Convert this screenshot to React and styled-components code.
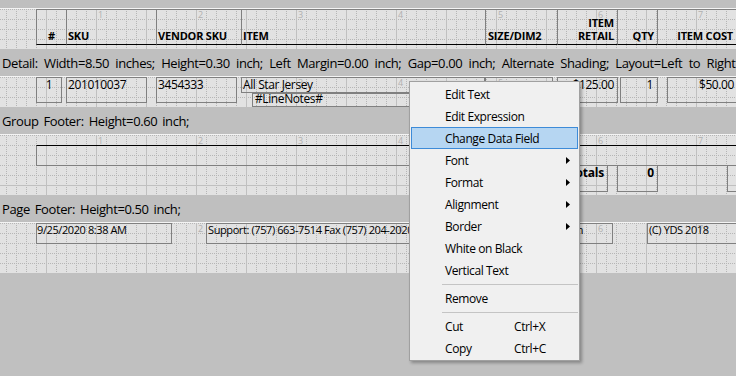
import React, { useId } from 'react';
import styled, { createGlobalStyle } from 'styled-components';

const GlobalStyle = createGlobalStyle`
  html, body {
    margin: 0;
    padding: 0;
    overflow: hidden;
    background: #c0c0c0;
  }
`;

const UI_FONT = '"Open Sans", "Noto Sans", "Liberation Sans", sans-serif';

const Page = styled.div`
  position: relative;
  width: 736px;
  height: 376px;
  overflow: hidden;
  background: #c0c0c0;
  font-family: ${UI_FONT};
  color: #000;
`;

const Surface = styled.div`
  display: flex;
  flex-direction: column;
  width: 850px;
`;

const BandLabel = styled.div`
  display: flex;
  align-items: center;
  height: ${(p) => p.$h || 27}px;
  padding-left: 2px;
  background: #bfbfbf;
  border-bottom: 1px solid #f4f4f4;
  font-size: 13px;
  letter-spacing: -0.4px;
  word-spacing: ${(p) => p.$ws ?? 3}px;
  white-space: nowrap;
  overflow: hidden;
`;

const Band = styled.div`
  position: relative;
  height: ${(p) => p.$h}px;
  background: #e2e2e2;
  overflow: hidden;
`;

const GridSvg = styled.svg`
  position: absolute;
  left: 0;
  top: 0;
  width: 100%;
  height: 100%;
  pointer-events: none;
`;

const RulerNum = styled.text`
  font-family: ${UI_FONT};
  font-size: 9px;
  fill: #b0b0b0;
`;

const Field = styled.div`
  position: absolute;
  left: ${(p) => p.$x}px;
  top: ${(p) => p.$y || 0}px;
  width: ${(p) => p.$w}px;
  height: ${(p) => p.$h}px;
  box-sizing: border-box;
  border: 1px solid #808080;
  ${(p) => p.$topLine && 'border-top-color: #000;'}
  padding: 0 ${(p) => p.$pr ?? 1}px 0 ${(p) => p.$pl ?? 1}px;
  font-size: ${(p) => p.$fs || 12}px;
  font-weight: ${(p) => (p.$bold ? 700 : 400)};
  line-height: ${(p) => p.$lh || 14}px;
  letter-spacing: ${(p) => (p.$bold ? '-0.2px' : '-0.4px')};
  text-align: ${(p) => p.$align || 'left'};
  white-space: nowrap;
  overflow: hidden;
`;

const HeaderCell = styled.div`
  position: absolute;
  top: 0;
  left: ${(p) => p.$x}px;
  width: ${(p) => p.$w}px;
  height: 36px;
  box-sizing: border-box;
  display: flex;
  flex-direction: column;
  justify-content: flex-end;
  align-items: ${(p) => p.$align || 'flex-start'};
  border: 1px solid #808080;
  border-bottom-color: #000;
  padding: 0 ${(p) => p.$pr ?? 1}px 2px ${(p) => p.$pl ?? 1}px;
  font-size: 11px;
  font-weight: 700;
  line-height: 13px;
  letter-spacing: -0.2px;
  text-align: right;
  white-space: nowrap;
`;

const Menu = styled.div`
  position: absolute;
  left: 409px;
  top: 81px;
  width: 171px;
  box-sizing: border-box;
  padding: 1px;
  background: #f0f0f0;
  border: 1px solid #a0a0a0;
  box-shadow: 2px 2px 3px rgba(0, 0, 0, 0.3);
  font-size: 12px;
  letter-spacing: -0.4px;
`;

const MenuItem = styled.div`
  display: flex;
  align-items: center;
  height: 22px;
  box-sizing: border-box;
  padding-left: 33px;
  border: 1px solid ${(p) => (p.$active ? '#3d8bd8' : 'transparent')};
  background: ${(p) => (p.$active ? '#b6d6f2' : 'transparent')};
`;

const ItemLabel = styled.span`
  flex: 0 0 69px;
  white-space: nowrap;
`;

const Shortcut = styled.span`
  white-space: nowrap;
`;

const SubArrow = styled.svg`
  margin-left: auto;
  margin-right: 7px;
`;

const Separator = styled.div`
  height: 1px;
  margin: 3px 0 2px 31px;
  background: #c4c4c4;
`;

function Grid({ height }) {
  const id = useId().replace(/:/g, '');
  const hLines = [];
  for (let y = 50; y < height; y += 50) hLines.push(y);
  return (
    <GridSvg shapeRendering="crispEdges">
      <defs>
        <pattern id={`d${id}`} x="6" y="0" width="10" height="10" patternUnits="userSpaceOnUse">
          {[0, 2, 4, 6, 8].map((v) => (
            <rect key={`v${v}`} x="0" y={v} width="1" height="1" fill="#b6b6b6" />
          ))}
          {[2, 4, 6, 8].map((v) => (
            <rect key={`h${v}`} x={v} y="0" width="1" height="1" fill="#b6b6b6" />
          ))}
        </pattern>
        <pattern id={`m${id}`} x="46" y="0" width="50" height="10" patternUnits="userSpaceOnUse">
          <rect x="0" y="0" width="1" height="10" fill="#c0c0c0" />
        </pattern>
      </defs>
      <rect width="100%" height="100%" fill={`url(#d${id})`} />
      <rect width="100%" height="100%" fill={`url(#m${id})`} />
      {hLines.map((y) => (
        <rect key={y} x="0" y={y} width="100%" height="1" fill="#c0c0c0" />
      ))}
      {[1, 2, 3, 4, 5, 6, 7, 8].map((n) => (
        <RulerNum key={n} x={98 + (n - 1) * 100} y="9">{n}</RulerNum>
      ))}
    </GridSvg>
  );
}

const HEADERS = [
  { x: 36, w: 31, text: '#', align: 'center', pl: 0, pr: 0 },
  { x: 66, w: 91, text: 'SKU' },
  { x: 156, w: 86, text: 'VENDOR SKU' },
  { x: 241, w: 245, text: 'ITEM' },
  { x: 485, w: 73, text: 'SIZE/DIM2', pl: 2 },
  { x: 557, w: 61, text: ['ITEM', 'RETAIL'], align: 'flex-end', pr: 3 },
  { x: 617, w: 41, text: 'QTY', align: 'flex-end', pr: 3 },
  { x: 657, w: 80, text: 'ITEM COST', align: 'flex-end', pr: 3 },
];

const MENU = [
  { label: 'Edit Text' },
  { label: 'Edit Expression' },
  { label: 'Change Data Field', active: true },
  { label: 'Font', sub: true },
  { label: 'Format', sub: true },
  { label: 'Alignment', sub: true },
  { label: 'Border', sub: true },
  { label: 'White on Black' },
  { label: 'Vertical Text' },
  { sep: true },
  { label: 'Remove' },
  { sep: true },
  { label: 'Cut', key: 'Ctrl+X' },
  { label: 'Copy', key: 'Ctrl+C' },
];

function ContextMenu() {
  return (
    <Menu>
      {MENU.map((m, i) =>
        m.sep ? (
          <Separator key={i} />
        ) : (
          <MenuItem key={i} $active={m.active}>
            <ItemLabel>{m.label}</ItemLabel>
            {m.key && <Shortcut>{m.key}</Shortcut>}
            {m.sub && (
              <SubArrow width="4" height="7" viewBox="0 0 4 7">
                <polygon points="0,0 4,3.5 0,7" fill="#000" />
              </SubArrow>
            )}
          </MenuItem>
        )
      )}
    </Menu>
  );
}

export default function App() {
  return (
    <Page>
      <GlobalStyle />
      <Surface>
        <BandLabel $h={8} />
        <Band $h={40}>
          <Grid height={40} />
          {HEADERS.map((h) => (
            <HeaderCell key={h.x} $x={h.x} $w={h.w} $align={h.align} $pl={h.pl} $pr={h.pr}>
              {Array.isArray(h.text) ? h.text.map((t) => <span key={t}>{t}</span>) : h.text}
            </HeaderCell>
          ))}
        </Band>

        <BandLabel $ws={3.3}>
          Detail: Width=8.50 inches; Height=0.30 inch; Left Margin=0.00 inch; Gap=0.00 inch; Alternate Shading; Layout=Left to Right
        </BandLabel>
        <Band $h={30}>
          <Grid height={30} />
          <Field $x={36} $w={26} $h={26} $align="center" $pl={0} $pr={0}>1</Field>
          <Field $x={66} $w={81} $h={26}>201010037</Field>
          <Field $x={156} $w={81} $h={26}>3454333</Field>
          <Field $x={241} $w={244} $h={16}>All Star Jersey</Field>
          <Field $x={252} $y={16} $w={233} $h={14} $lh={10} $pl={2}>#LineNotes#</Field>
          <Field $x={485} $w={68} $h={26} />
          <Field $x={557} $w={61} $h={26} $align="right" $pr={3}>$125.00</Field>
          <Field $x={620} $w={38} $h={26} $align="right" $pr={4}>1</Field>
          <Field $x={667} $w={70} $h={26} $align="right" $pr={2}>$50.00</Field>
        </Band>

        <BandLabel $ws={2}>Group Footer: Height=0.60 inch;</BandLabel>
        <Band $h={60}>
          <Grid height={60} />
          <Field $x={36} $y={10} $w={814} $h={21} $topLine />
          <Field $x={540} $y={30} $w={68} $h={27} $bold $align="right" $pr={3}>Totals</Field>
          <Field $x={617} $y={30} $w={41} $h={27} $bold $align="right" $pr={3}>0</Field>
          <Field $x={727} $y={30} $w={60} $h={27} />
        </Band>

        <BandLabel $ws={2}>Page Footer: Height=0.50 inch;</BandLabel>
        <Band $h={50}>
          <Grid height={50} />
          <Field $x={36} $w={136} $h={21} $fs={11} $lh={12} $pl={0}>9/25/2020 8:38 AM</Field>
          <Field $x={206} $w={407} $h={21} $fs={11} $lh={12}>
            Support: (757) 663-7514 Fax (757) 204-2020 Email: support@yearbooksites.com
          </Field>
          <Field $x={647} $w={120} $h={21} $fs={11} $lh={12}>(C) YDS 2018</Field>
        </Band>
      </Surface>
      <ContextMenu />
    </Page>
  );
}
